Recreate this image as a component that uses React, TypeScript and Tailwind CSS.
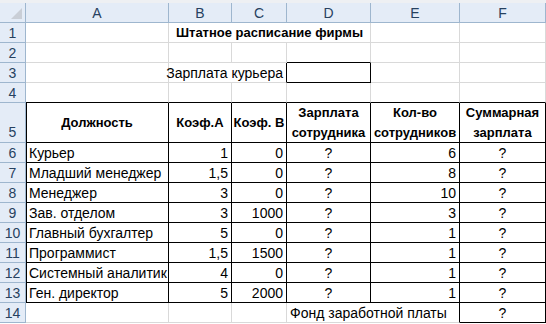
import type { ReactNode } from 'react';

const cols = ['A', 'B', 'C', 'D', 'E', 'F'];

const staff = [
  { name: 'Курьер', a: '1', b: '0', n: '6' },
  { name: 'Младший менеджер', a: '1,5', b: '0', n: '8' },
  { name: 'Менеджер', a: '3', b: '0', n: '10' },
  { name: 'Зав. отделом', a: '3', b: '1000', n: '3' },
  { name: 'Главный бухгалтер', a: '5', b: '0', n: '1' },
  { name: 'Программист', a: '1,5', b: '1500', n: '1' },
  { name: 'Системный аналитик', a: '4', b: '0', n: '1' },
  { name: 'Ген. директор', a: '5', b: '2000', n: '1' },
];

type CellProps = {
  r?: boolean;
  b?: boolean;
  l?: boolean;
  span?: 2 | 3;
  align?: 'left' | 'right' | 'center';
  bold?: boolean;
  tall?: boolean;
  children?: ReactNode;
};

function clsx(...parts: (string | false | undefined)[]) {
  return parts.filter(Boolean).join(' ');
}

function Cell({ r, b, l, span, align = 'left', bold, tall, children }: CellProps) {
  return (
    <div
      className={clsx(
        'flex border-r border-b whitespace-nowrap px-[3px] text-black',
        bold ? 'text-[13px] font-bold' : 'text-[14px]',
        tall ? 'h-[40px] items-center leading-[20px]' : 'h-[20px] items-center leading-none',
        r ? 'border-r-black' : 'border-r-[#d9d9d9]',
        b ? 'border-b-black' : 'border-b-[#d9d9d9]',
        l && 'shadow-[inset_1px_0_0_#000]',
        span === 2 && 'col-span-2',
        span === 3 && 'col-span-3',
        align === 'left' && 'justify-start text-left',
        align === 'right' && 'justify-end text-right',
        align === 'center' && 'justify-center text-center'
      )}
    >
      {children}
    </div>
  );
}

function RowNum({ n, tall }: { n: number; tall?: boolean }) {
  return (
    <div
      className={clsx(
        'flex justify-center border-r border-b border-r-[#9eb6ce] border-b-[#9eb6ce] bg-[#e4ecf7] text-[14px] leading-none text-[#27415f]',
        tall ? 'h-[40px] items-end pb-[3px]' : 'h-[20px] items-center'
      )}
    >
      {n}
    </div>
  );
}

function Row({ n, s }: { n: number; s: (typeof staff)[number] }) {
  return (
    <>
      <RowNum n={n} />
      <Cell r b l>{s.name}</Cell>
      <Cell r b align="right">{s.a}</Cell>
      <Cell r b align="right">{s.b}</Cell>
      <Cell r b align="center">?</Cell>
      <Cell r b align="right">{s.n}</Cell>
      <Cell r b align="center">?</Cell>
    </>
  );
}

export default function App() {
  return (
    <div className="h-[324px] w-[546px] overflow-hidden bg-white font-['Liberation_Sans',Arial,sans-serif]">
      <div className="h-[3px] bg-[#eef0f3]" />
      <div className="grid grid-cols-[26px_143px_63px_55px_84px_89px_86px]">
        {/* column headers */}
        <div className="relative h-[20px] border-r border-b border-r-[#9eb6ce] border-b-[#9eb6ce] bg-[#e4ecf7]">
          <div className="absolute right-[3px] bottom-[3px] h-0 w-0 border-b-[11px] border-l-[11px] border-b-[#c9ced6] border-l-transparent" />
        </div>
        {cols.map(c => (
          <div
            key={c}
            className="flex h-[20px] items-center justify-center border-r border-b border-r-[#9eb6ce] border-b-[#9eb6ce] bg-[#e4ecf7] text-[14px] leading-none text-[#27415f]"
          >
            {c}
          </div>
        ))}

        {/* 1 */}
        <RowNum n={1} />
        <Cell />
        <Cell span={3} align="center" bold>Штатное расписание фирмы</Cell>
        <Cell />
        <Cell />

        {/* 2 */}
        <RowNum n={2} />
        <Cell />
        <Cell />
        <Cell />
        <Cell b />
        <Cell />
        <Cell />

        {/* 3 */}
        <RowNum n={3} />
        <Cell />
        <Cell span={2} align="right" r>Зарплата курьера</Cell>
        <Cell r b />
        <Cell />
        <Cell />

        {/* 4 */}
        <RowNum n={4} />
        <Cell b />
        <Cell b />
        <Cell b />
        <Cell b />
        <Cell b />
        <Cell b />

        {/* 5 */}
        <RowNum n={5} tall />
        <Cell r b l tall bold align="center">Должность</Cell>
        <Cell r b tall bold align="center">Коэф.А</Cell>
        <Cell r b tall bold align="center">Коэф. В</Cell>
        <Cell r b tall bold align="center">
          <span>Зарплата<br />сотрудника</span>
        </Cell>
        <Cell r b tall bold align="center">
          <span>Кол-во<br />сотрудников</span>
        </Cell>
        <Cell r b tall bold align="center">
          <span>Суммарная<br />зарплата</span>
        </Cell>

        {staff.map((s, i) => (
          <Row key={s.name} n={i + 6} s={s} />
        ))}

        {/* 14 */}
        <RowNum n={14} />
        <Cell />
        <Cell />
        <Cell />
        <Cell span={2} r>Фонд заработной платы</Cell>
        <Cell r b align="center">?</Cell>
      </div>
    </div>
  );
}
